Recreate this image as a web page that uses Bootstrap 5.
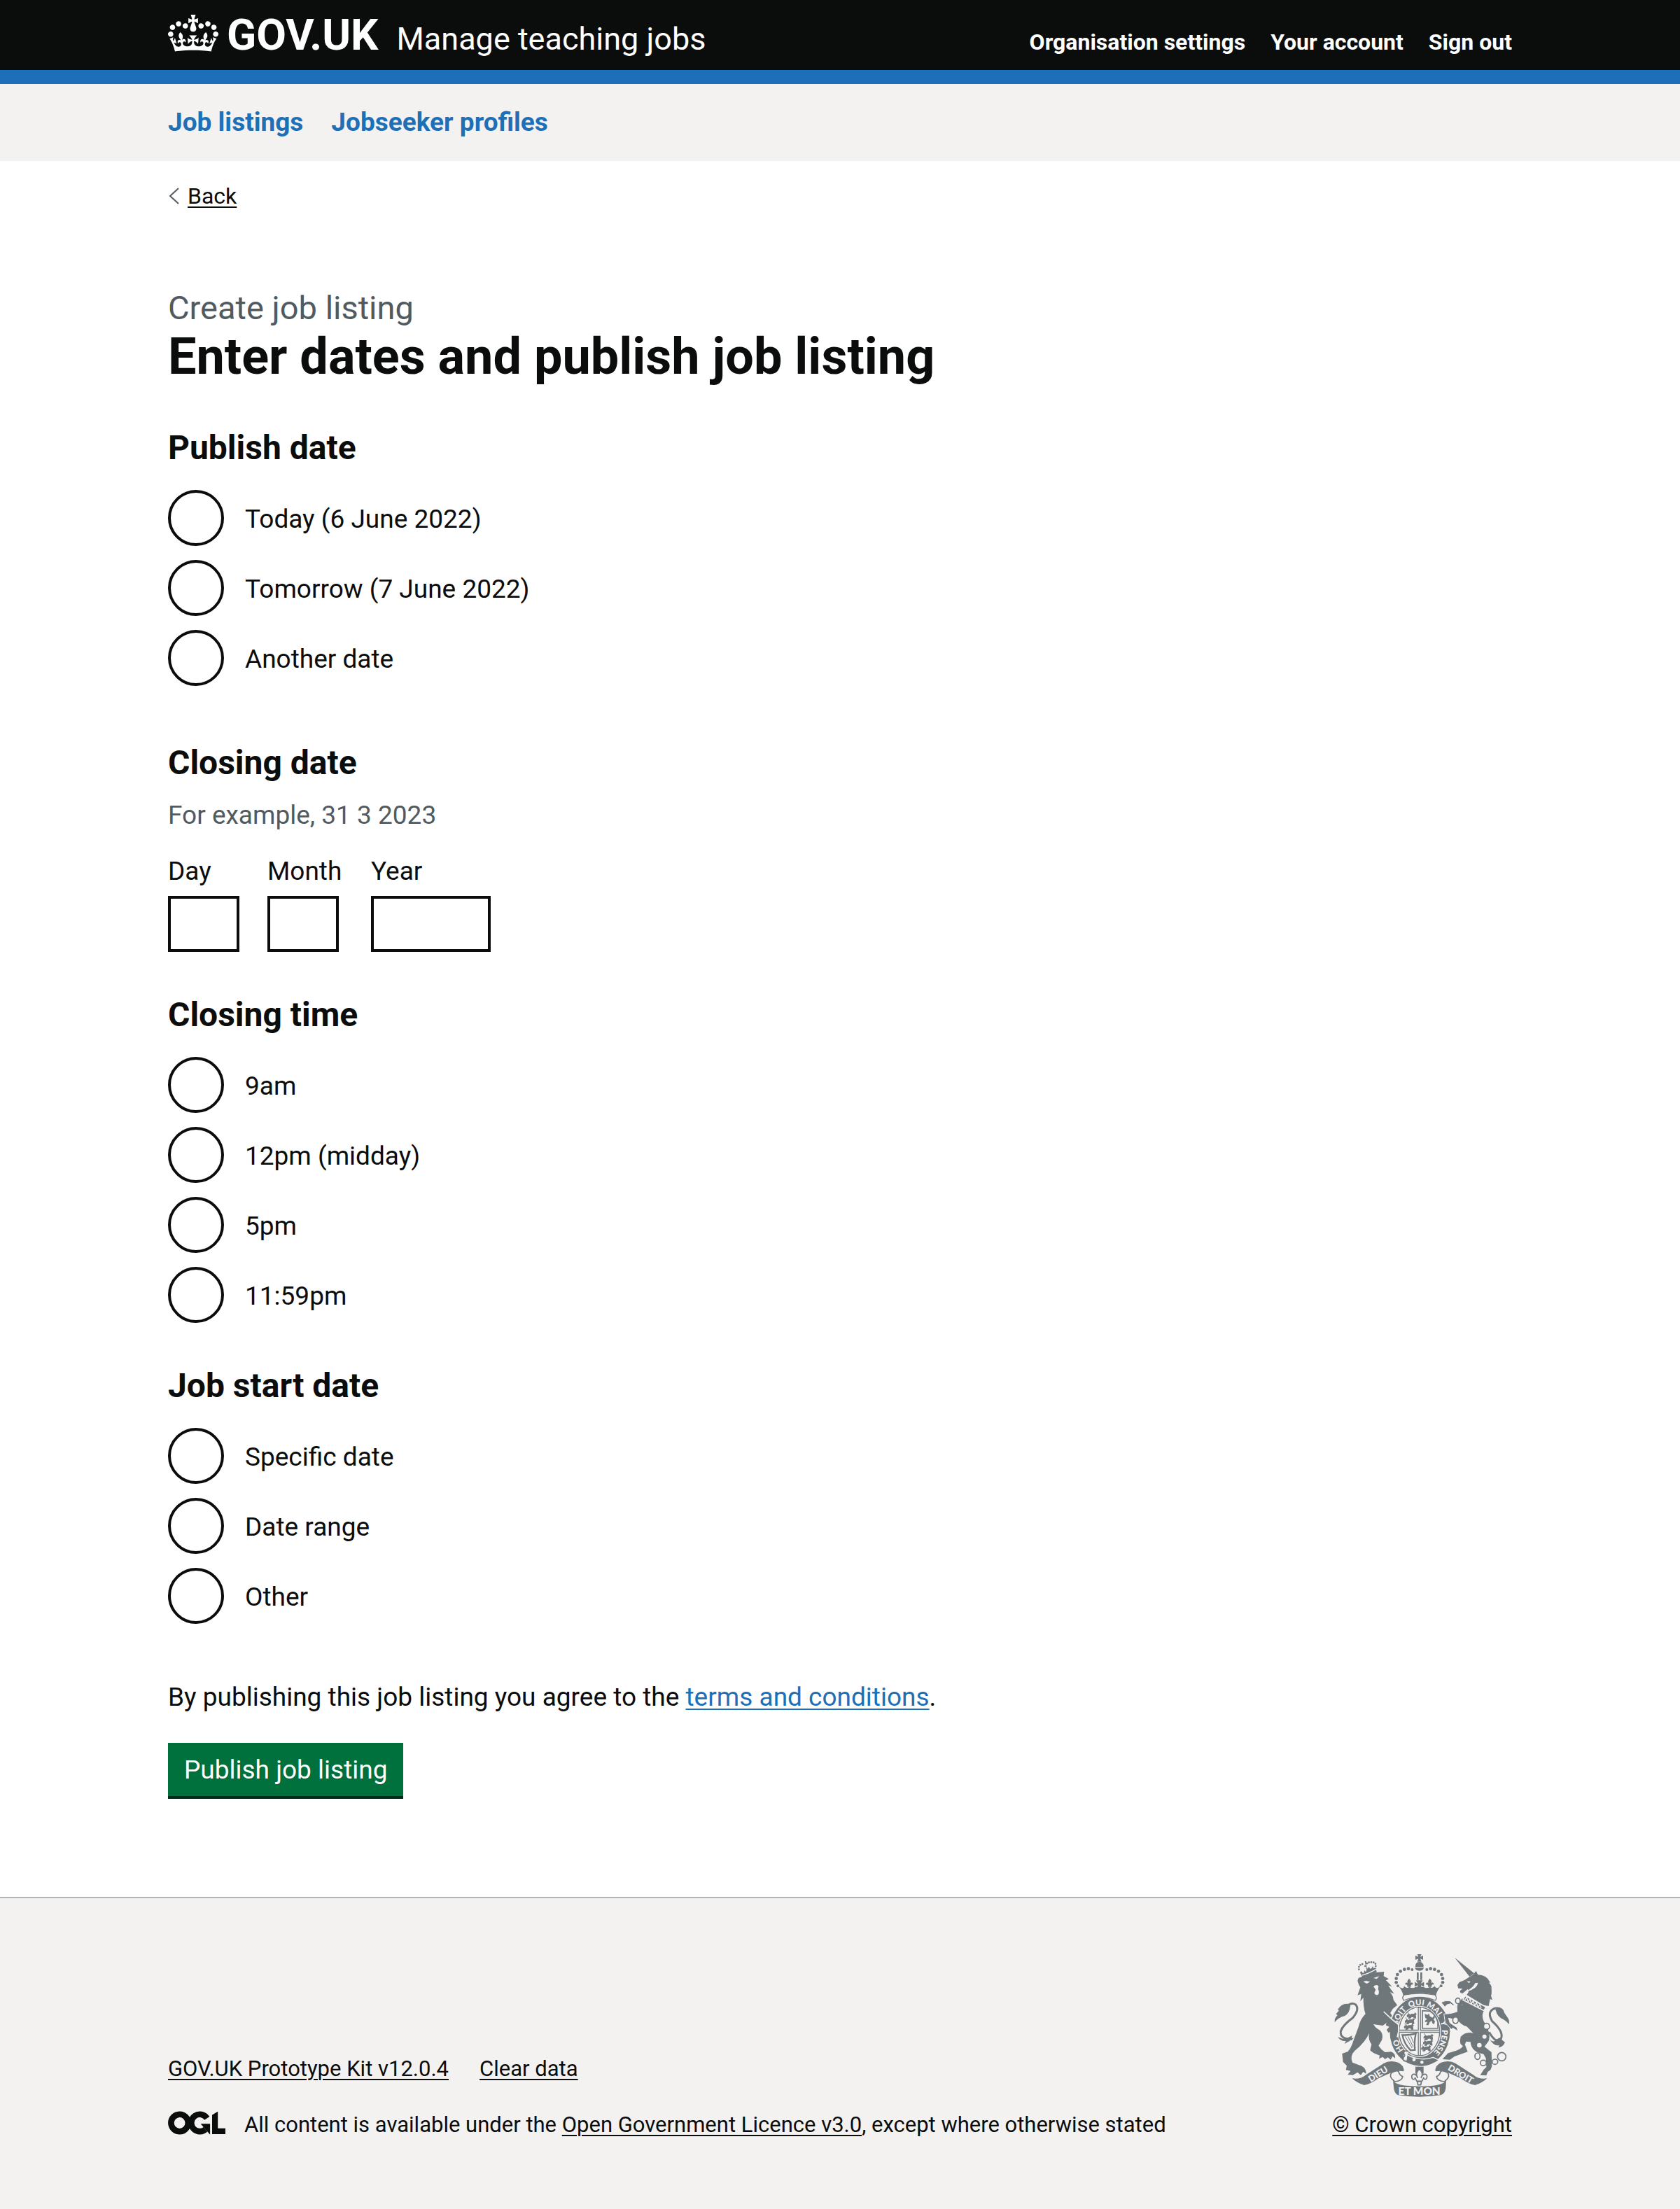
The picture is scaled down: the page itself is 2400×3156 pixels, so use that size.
<!DOCTYPE html>
<html lang="en">
<head>
<meta charset="utf-8">
<meta name="viewport" content="width=device-width, initial-scale=1">
<title>Enter dates and publish job listing - Manage teaching jobs - GOV.UK</title>
<link rel="stylesheet" href="https://cdn.jsdelivr.net/npm/bootstrap@5.3.0/dist/css/bootstrap.min.css">
<style>
:root{--ink:#0b0c0c;--link:#1d70b8;--muted-ink:#505a5f;--panel:#f3f2f1;--crest:#6f777b}
body{font-family:Roboto,"Liberation Sans",sans-serif;font-size:37px;line-height:50px;color:var(--ink);background:var(--panel)}
.page-width{max-width:1920px;padding:0;margin-left:auto;margin-right:auto;width:100%}
a{text-decoration-thickness:2px;text-underline-offset:4px;color:var(--link)}
.ink-link{color:var(--ink)}
.site-header{background:var(--ink);border-bottom:20px solid var(--link)}
.header-row{padding-top:20px;height:100px;line-height:60px}
.crown{width:72px;height:53px;margin-top:1px;margin-right:12px}
.wordmark{font-size:62px;margin-right:26px}
.service-name{font-size:45px}
.header-links{gap:36px;font-size:32px}
.service-nav{background:var(--panel)}
.service-nav ul{gap:40px;padding:30px 0}
.back-link{font-size:32px;line-height:40px;margin-top:30px;gap:12px}
.back-link svg{width:16px;height:24px}
.page-body{padding-top:110px;padding-bottom:140px}
.caption-l{font-size:47px;line-height:60px;color:var(--muted-ink)}
.title-l{font-size:72px;line-height:80px;margin-bottom:60px}
fieldset{margin-bottom:60px}
fieldset.roomy{margin-bottom:80px}
legend{float:none;font-size:48px;line-height:60px;font-weight:700;margin-bottom:30px}
legend.tight{margin-bottom:20px}
.radio-list{gap:20px}
.radio-row{gap:30px;margin:0;padding:0;min-height:80px}
.radio-row .form-check-input{float:none;flex:none;width:80px;height:80px;margin:0;border:4px solid var(--ink);background-color:#fff}
.radio-row .form-check-label{padding-top:3px}
.hint{color:var(--muted-ink);margin-bottom:30px}
.date-parts{gap:40px}
.date-part{min-width:102px}
.date-part label{display:block;margin-bottom:10px}
.date-part .form-control{width:102px;height:80px;border:4px solid var(--ink);border-radius:0;font-size:37px;padding:8px}
.date-part .form-control.wide{width:171px}
.month-part{min-width:108px}
.btn-publish{background:#00703c;color:#fff;border:0;border-bottom:4px solid #002d18;border-radius:0;font-size:37px;line-height:50px;padding:14px 23px 12px;margin-top:40px}
.btn-publish:hover{background:#005a30;color:#fff}
.site-footer{border-top:2px solid #b1b4b6;background:var(--panel);padding:80px 0 100px;font-size:31px;line-height:40px}
.footer-links{gap:44px;margin-bottom:40px}
.licence{gap:27px}
.ogl{width:82px;height:34px}
.royal-arms{width:250px;height:204px;margin-bottom:20px;margin-right:2px}
</style>
</head>
<body>
<header class="site-header text-white">
  <div class="page-width header-row d-flex align-items-baseline">
    <a href="#" class="d-flex align-items-baseline text-white text-decoration-none">
      <svg class="crown align-self-start" viewBox="0 0 132 97" aria-hidden="true"><path fill="currentColor" fill-rule="evenodd" d="M25 30.2c3.5 1.5 7.7-.2 9.1-3.7 1.5-3.6-.2-7.8-3.9-9.2-3.6-1.4-7.6.3-9.1 3.9-1.4 3.5.3 7.5 3.9 9zM9 39.5c3.6 1.5 7.8-.2 9.2-3.7 1.5-3.6-.2-7.8-3.9-9.1-3.6-1.5-7.6.2-9.1 3.8-1.4 3.5.3 7.5 3.8 9zM4.4 57.2c3.5 1.5 7.7-.2 9.1-3.8 1.5-3.6-.2-7.7-3.9-9.1-3.5-1.5-7.6.3-9.1 3.8-1.4 3.5.3 7.6 3.9 9.1zm38.3-21.4c3.5 1.5 7.7-.2 9.1-3.8 1.5-3.6-.2-7.7-3.9-9.1-3.6-1.5-7.6.3-9.1 3.8-1.3 3.6.4 7.7 3.9 9.1zm64.4-5.6c-3.6 1.5-7.8-.2-9.1-3.7-1.5-3.6.2-7.8 3.8-9.2 3.6-1.4 7.7.3 9.2 3.9 1.3 3.5-.4 7.5-3.9 9zm15.9 9.3c-3.6 1.5-7.7-.2-9.1-3.7-1.5-3.6.2-7.8 3.7-9.1 3.6-1.5 7.7.2 9.2 3.8 1.5 3.5-.3 7.5-3.8 9zm4.7 17.7c-3.6 1.5-7.8-.2-9.2-3.8-1.5-3.6.2-7.7 3.9-9.1 3.6-1.5 7.7.3 9.2 3.8 1.3 3.5-.4 7.6-3.9 9.1zM89.3 35.8c-3.6 1.5-7.8-.2-9.2-3.8-1.4-3.6.2-7.7 3.9-9.1 3.6-1.5 7.7.3 9.2 3.8 1.4 3.6-.3 7.7-3.9 9.1zM69.7 17.7l8.9 4.7V9.3l-8.9 2.8c-.2-.3-.5-.6-.9-.9L72.4 0H59.6l3.5 11.2c-.3.3-.6.5-.9.9l-8.8-2.8v13.1l8.8-4.7c.3.3.6.7.9.9l-5 15.4v.1c-.2.8-.4 1.6-.4 2.4 0 4.1 3.1 7.5 7 8.1h.2c.3 0 .7.1 1 .1.4 0 .7 0 1-.1h.2c4-.6 7.1-4.1 7.1-8.1 0-.8-.1-1.7-.4-2.4V34l-5.1-15.4c.4-.2.7-.6 1-.9zM66 92.8c16.9 0 32.8 1.1 47.1 3.2 4-16.9 8.9-26.7 14-33.5l-9.6-3.4c1 4.9 1.1 7.2 0 10.2-1.5-1.4-3-4.3-4.2-8.7L108.6 76c2.8-2 5-3.2 7.5-3.3-4.4 9.4-10 11.9-13.6 11.2-4.3-.8-6.3-4.6-5.6-7.9 1-4.7 5.7-5.9 8-.5 4.3-8.7-3-11.4-7.6-8.8 7.1-7.2 7.9-13.5 2.1-21.1-8 6.1-8.1 12.3-4.5 20.8-4.7-5.4-12.1-2.5-9.5 6.2 3.4-5.2 7.9-2 7.2 3.1-.6 4.3-6.4 7.8-13.5 7.2-10.3-.9-10.9-8-11.2-13.8 2.5-.5 7.1 1.8 11 7.3L80.2 60c-4.1 4.4-8 5.3-12.3 5.4 1.4-4.4 8-11.6 8-11.6H55.5s6.4 7.2 7.9 11.6c-4.2-.1-8-1-12.3-5.4l1.4 16.4c3.9-5.5 8.5-7.7 10.9-7.3-.3 5.8-.9 12.8-11.1 13.8-7.2.6-12.9-2.9-13.5-7.2-.7-5 3.8-8.3 7.1-3.1 2.7-8.7-4.6-11.6-9.4-6.2 3.7-8.5 3.6-14.7-4.6-20.8-5.8 7.6-5 13.9 2.2 21.1-4.7-2.6-11.9.1-7.7 8.8 2.3-5.5 7.1-4.2 8.1.5.7 3.3-1.3 7.1-5.7 7.9-3.5.7-9-1.8-13.5-11.2 2.5.1 4.7 1.3 7.5 3.3l-4.7-15.4c-1.2 4.4-2.7 7.2-4.3 8.7-1.1-3-.9-5.3 0-10.2l-9.5 3.4c5 6.9 9.9 16.7 14 33.5 14.8-2.1 30.8-3.2 47.7-3.2z"/></svg>
      <span class="wordmark fw-bold">GOV.UK</span>
    </a>
    <a href="#" class="service-name text-white text-decoration-none">Manage teaching jobs</a>
    <nav class="header-links d-flex ms-auto fw-bold" aria-label="Account">
      <a href="#" class="text-white text-decoration-none">Organisation settings</a>
      <a href="#" class="text-white text-decoration-none">Your account</a>
      <a href="#" class="text-white text-decoration-none">Sign out</a>
    </nav>
  </div>
</header>
<nav class="service-nav" aria-label="Service">
  <ul class="page-width list-unstyled d-flex mb-0 fw-bold">
    <li><a href="#" class="text-decoration-none">Job listings</a></li>
    <li><a href="#" class="text-decoration-none">Jobseeker profiles</a></li>
  </ul>
</nav>
<div class="bg-white overflow-hidden">
  <div class="page-width">
    <div class="back-link d-flex align-items-center">
      <svg viewBox="0 0 16 24" fill="none" stroke="#505a5f" stroke-width="2" aria-hidden="true"><path d="M15 1 3 12l12 11"/></svg>
      <a href="#" class="ink-link">Back</a>
    </div>
    <main class="page-body">
      <div class="caption-l">Create job listing</div>
      <h1 class="title-l fw-bold">Enter dates and publish job listing</h1>
      <form>
        <fieldset class="roomy">
          <legend>Publish date</legend>
          <div class="radio-list d-flex flex-column">
            <div class="radio-row form-check d-flex align-items-center"><input class="form-check-input" type="radio" name="publish" id="p1"><label class="form-check-label" for="p1">Today (6 June 2022)</label></div>
            <div class="radio-row form-check d-flex align-items-center"><input class="form-check-input" type="radio" name="publish" id="p2"><label class="form-check-label" for="p2">Tomorrow (7 June 2022)</label></div>
            <div class="radio-row form-check d-flex align-items-center"><input class="form-check-input" type="radio" name="publish" id="p3"><label class="form-check-label" for="p3">Another date</label></div>
          </div>
        </fieldset>
        <fieldset>
          <legend class="tight">Closing date</legend>
          <div class="hint">For example, 31 3 2023</div>
          <div class="date-parts d-flex">
            <div class="date-part"><label for="day">Day</label><input class="form-control" id="day" type="text" inputmode="numeric"></div>
            <div class="date-part month-part"><label for="month">Month</label><input class="form-control" id="month" type="text" inputmode="numeric"></div>
            <div class="date-part"><label for="year">Year</label><input class="form-control wide" id="year" type="text" inputmode="numeric"></div>
          </div>
        </fieldset>
        <fieldset>
          <legend>Closing time</legend>
          <div class="radio-list d-flex flex-column">
            <div class="radio-row form-check d-flex align-items-center"><input class="form-check-input" type="radio" name="time" id="t1"><label class="form-check-label" for="t1">9am</label></div>
            <div class="radio-row form-check d-flex align-items-center"><input class="form-check-input" type="radio" name="time" id="t2"><label class="form-check-label" for="t2">12pm (midday)</label></div>
            <div class="radio-row form-check d-flex align-items-center"><input class="form-check-input" type="radio" name="time" id="t3"><label class="form-check-label" for="t3">5pm</label></div>
            <div class="radio-row form-check d-flex align-items-center"><input class="form-check-input" type="radio" name="time" id="t4"><label class="form-check-label" for="t4">11:59pm</label></div>
          </div>
        </fieldset>
        <fieldset class="roomy">
          <legend>Job start date</legend>
          <div class="radio-list d-flex flex-column">
            <div class="radio-row form-check d-flex align-items-center"><input class="form-check-input" type="radio" name="start" id="s1"><label class="form-check-label" for="s1">Specific date</label></div>
            <div class="radio-row form-check d-flex align-items-center"><input class="form-check-input" type="radio" name="start" id="s2"><label class="form-check-label" for="s2">Date range</label></div>
            <div class="radio-row form-check d-flex align-items-center"><input class="form-check-input" type="radio" name="start" id="s3"><label class="form-check-label" for="s3">Other</label></div>
          </div>
        </fieldset>
        <p class="mb-0">By publishing this job listing you agree to the <a href="#">terms and conditions</a>.</p>
        <button type="submit" class="btn btn-publish d-block">Publish job listing</button>
      </form>
    </main>
  </div>
</div>
<footer class="site-footer">
  <div class="page-width d-flex justify-content-between align-items-end">
    <div>
      <div class="footer-links d-flex">
        <a href="#" class="ink-link">GOV.UK Prototype Kit v12.0.4</a>
        <a href="#" class="ink-link">Clear data</a>
      </div>
      <div class="licence d-flex align-items-start">
        <svg class="ogl" viewBox="0 0 484 196" role="img" aria-label="Open Government Licence">
          <clipPath id="slant"><path d="M371 32 422 0V143h62v51H371z"/></clipPath>
          <g fill="none" stroke="#0b0c0c" stroke-width="51">
            <circle cx="98" cy="98" r="72"/>
            <path d="M329 59A72 72 0 1 0 316 152"/>
            <path d="M396 0V168H484" clip-path="url(#slant)"/>
          </g>
          <path d="M275 106h80v88h-3z" fill="#0b0c0c"/>
        </svg>
        <span>All content is available under the <a href="#" class="ink-link">Open Government Licence v3.0</a>, except where otherwise stated</span>
      </div>
    </div>
    <div class="d-flex flex-column align-items-center">
      <svg class="royal-arms" viewBox="72 66 750 612" role="img" aria-label="Royal coat of arms" font-family="Lato,sans-serif" font-weight="900">
        <defs>
          <path id="garter" d="M438 510A96 113 0 0 1 438 284A96 113 0 0 1 438 510"/>
          <path id="fleur" d="M0-18C9-8 9-2 4 4 10-4 19 0 16 9 13 6 9 8 8 12L7 18H-7L-8 12C-9 8-13 6-16 9-19 0-10-4-4 4-9-2-9-8 0-18z"/>
          <g id="beast"><path d="M-22-4-14-10-8-6-3-9H9l4-6 5 6-4 3 2 14H9l-3-6-10 1-4 6h-8l3-9-8 3z"/><path d="M-14-10q-8-6-4-9" fill="none" stroke="#6f777b" stroke-width="3"/></g>
          <g id="pearls" fill="#6f777b"><circle cx="345" cy="202" r="6"/><circle cx="338" cy="187" r="7"/><circle cx="338" cy="170" r="7"/><circle cx="343" cy="153" r="7"/><circle cx="356" cy="139" r="7"/><circle cx="373" cy="131" r="7"/><circle cx="390" cy="128" r="7"/><circle cx="406" cy="132" r="6"/></g>
        </defs>
        <g fill="#6f777b">
          <!-- lion -->
          <circle cx="178" cy="131" r="4"/><circle cx="178" cy="120" r="4"/><circle cx="184" cy="112" r="4"/><circle cx="193" cy="108" r="4"/><circle cx="221" cy="101" r="4"/><circle cx="231" cy="100" r="4"/><circle cx="241" cy="101" r="4"/><circle cx="249" cy="107" r="4"/><circle cx="250" cy="117" r="4"/>
          <path d="M203 96h7l-1 6 8-1v8l-7-1 1 12 4 8 6-9 5 10 7-4 4-8 4 9 10-2 3 20-60 20-12-20 8-5 5 9 5-4 1-9 7 7 3-9-2-14-7 2-1-7 6 0z"/>
          <path d="M192 156Q222 148 256 128" stroke="#f3f2f1" stroke-width="4" fill="none"/>
          <path d="M176 168Q232 142 286 141L284 160 306 172 294 178Q306 190 320 205L304 200Q314 216 329 235L311 229Q325 244 326 262L342 284 323 300 312 318 346 362V392L342 418 333 422 324 417 317 402 320 392 304 400 299 390 310 377 294 370 300 358 280 372 240 366Q250 384 268 392 285 410 276 434L262 458Q272 474 290 486L316 484Q336 492 333 512L322 503 314 518 302 508 290 516 280 506 264 514 267 500Q240 492 226 478L232 452Q216 432 222 404 206 442 160 480 138 502 150 530L190 545Q210 556 209 578L196 570 186 584 172 572 152 584 130 582 142 566 122 562 126 544 110 528 106 492 130 484Q144 470 156 432L176 378Q184 344 206 322 196 292 197 252L184 268 188 236 172 242 184 208 178 198 172 180z"/>
          <path d="M150 430Q96 432 100 396 108 370 152 338 182 302 164 282 150 272 132 284" fill="none" stroke="#6f777b" stroke-width="9"/>
          <path d="M140 280Q106 272 88 302L92 308 80 322 86 328Q72 340 74 358 88 338 118 330 138 318 141 288z"/>
          <path d="M88 420Q114 434 126 426L150 414Q140 430 158 424 136 442 116 450L122 438Q98 440 88 420z"/>
          <!-- unicorn -->
          <path d="M588 80 672 148 652 162z"/>
          <path d="M650 164Q668 154 670 150L680 138 688 154Q724 154 740 186L736 190Q748 200 746 212 748 236 744 244L750 262 740 258 734 288 712 284 640 240Q654 222 644 216L622 234Q608 232 612 222L622 214 604 212 600 198 608 186Q632 178 650 164z"/>
          <path d="M620 256 714 308Q702 324 712 352 746 404 734 438L716 462 746 486 748 546 742 562 730 570 724 586 698 584 712 562 724 550 722 512 712 494Q660 486 656 442L638 440 632 452 644 484 588 504 568 518 536 516 560 490Q616 476 624 460 606 452 614 420 634 396 668 404L640 376Q610 366 600 344L600 316 600 284z"/>
          <path d="M736 400Q764 450 786 430 802 400 748 352 724 308 764 297" fill="none" stroke="#6f777b" stroke-width="9"/>
          <path d="M762 293Q796 290 802 318 812 334 816 338 824 350 821 366 808 350 786 340 764 322 762 293z"/>
          <path d="M738 430Q752 446 762 436L780 424Q794 436 804 444 794 466 776 466L780 456Q756 462 738 430z"/>
        </g>
        <path d="M196 184 208 180 226 184 212 192zM240 168 266 160 254 172zM240 204q16-12 22 0l-2 12q8 14 0 24-12 4-16-8l6-14z" fill="#f3f2f1"/>
        <path d="M640 182l16 0-6 8zM688 188Q684 216 636 226 670 208 676 190z" fill="#f3f2f1"/>
        <path d="M632 244 722 292 714 308 624 262z" fill="#6f777b" stroke="#f3f2f1" stroke-width="5"/>
        <path d="M632 262l8-12 6 20 8-12 6 20 8-12 6 20 8-12 6 20 8-12 6 16" fill="none" stroke="#f3f2f1" stroke-width="4"/>
        <!-- garter and shield -->
        <ellipse cx="439" cy="397" rx="134" ry="154" fill="#f3f2f1"/>
        <ellipse cx="439" cy="397" rx="129" ry="148" fill="#6f777b"/>
        <ellipse cx="437" cy="397" rx="93" ry="110" fill="#f3f2f1"/>
        <ellipse cx="437" cy="397" rx="87" ry="104" fill="none" stroke="#6f777b" stroke-width="4"/>
        <path d="M437 292V500M350 396H525" stroke="#6f777b" stroke-width="13"/>
        <path d="M437 296V498M352 396H523" stroke="#f3f2f1" stroke-width="5"/>
        <g fill="#6f777b" stroke="#6f777b" stroke-width="3"><use href="#beast" x="406" y="332"/><use href="#beast" x="398" y="356"/><use href="#beast" x="394" y="380"/><use href="#beast" x="478" y="424"/><use href="#beast" x="476" y="448"/><use href="#beast" x="468" y="472"/></g>
        <path d="M450 308V384H516V356Q508 326 482 310z" fill="none" stroke="#6f777b" stroke-width="5"/>
        <path d="M460 322l12 4 6-6 4 12 12 6 4-8 6 6-6 10 6 8-4 12-6-2-4-12-8 4-6 14h-10l6-16-8 4-4-6 10-8-8-6z" fill="#6f777b"/>
        <path d="M364 412Q390 414 422 406 414 440 418 476L400 478Q372 452 364 412z" fill="none" stroke="#6f777b" stroke-width="7"/>
        <path d="M376 418l30 50M388 418l22 44M400 416l12 30" stroke="#6f777b" stroke-width="3"/>
        <g font-size="34" fill="#f3f2f1" text-anchor="middle">
          <text><textPath href="#garter" startOffset="16%">HO</textPath></text>
          <text><textPath href="#garter" startOffset="35%">SOIT</textPath></text>
          <text><textPath href="#garter" startOffset="48%">QUI</textPath></text>
          <text><textPath href="#garter" startOffset="60%">MAL</textPath></text>
          <text><textPath href="#garter" startOffset="70%">Y</textPath></text>
          <text><textPath href="#garter" startOffset="82%">PENSE</textPath></text>
        </g>
        <path d="M372 486Q392 508 437 514 470 518 496 508L522 520Q480 550 437 547 396 544 368 522z" fill="#6f777b" stroke="#f3f2f1" stroke-width="4"/>
        <g fill="#f3f2f1"><circle cx="414" cy="518" r="7"/><circle cx="448" cy="529" r="7"/></g>
        <path d="M388 482q-20-6-18 10 8 8-2 16-4 18 14 16" fill="#f3f2f1" stroke="#6f777b" stroke-width="6"/>
        <!-- forelegs over the garter -->
        <path d="M276 322 284 314 318 346 346 370V396L342 420 333 426 324 419 317 404 320 394 304 402 297 390 308 377 293 370 298 356 280 370 250 364z" fill="#6f777b"/>
        <path d="M284 312 318 344 348 368V396L342 422" fill="none" stroke="#f3f2f1" stroke-width="5"/>
        <g fill="#6f777b">
          <path d="M622 284 590 296 572 278 556 282 546 292 530 272Q550 262 568 266L596 290 604 310z" stroke="#f3f2f1" stroke-width="3"/>
          <path d="M612 306Q580 322 542 322L548 360 574 388 580 382 602 396 598 380 568 360 562 340 606 350z" stroke="#f3f2f1" stroke-width="3"/>
          <path d="M600 284h34v70h-34z"/>
        </g>
        <!-- chain -->
        <g fill="#f3f2f1"><circle cx="585" cy="292" r="9"/><circle cx="716" cy="419" r="9"/><circle cx="694" cy="456" r="10"/></g>
        <g fill="#f3f2f1" stroke="#6f777b" stroke-width="5"><ellipse cx="602" cy="266" rx="10" ry="12"/><ellipse cx="592" cy="349" rx="12" ry="14"/><circle cx="725" cy="375" r="13"/><ellipse cx="686" cy="503" rx="11" ry="14"/><ellipse cx="711" cy="532" rx="13" ry="12"/><ellipse cx="761" cy="527" rx="12" ry="11"/><circle cx="790" cy="505" r="18"/></g>
        <!-- crown -->
        <use href="#pearls"/><use href="#pearls" transform="matrix(-1 0 0 1 875 0)"/>
        <g fill="#6f777b">
          <path d="M428 66h18l-5 11 12-5v18l-12-5 5 13h-18l5-13-13 5V72l13 5z"/>
          <path d="M420 120Q418 100 437 98 456 100 455 120zM418 123h38q-2 14-19 14t-19-14z"/>
          <path d="M426 144h8v32h-8zM441 144h8v32h-8z"/>
          <path d="M422 178h30l-9 14 14-7v20l-14-6 4 10h-20l4-10-14 6v-20l14 7z"/>
          <use href="#fleur" x="393" y="188"/><use href="#fleur" x="482" y="188"/>
          <path d="M346 200Q368 222 372 202 380 216 394 206 410 216 420 206H456Q466 216 482 206 494 216 502 202 508 220 530 200 512 222 508 242 438 222 368 242 364 222 346 200z"/>
        </g>
        <path d="M372 240Q437 228 504 240 514 252 506 264 437 236 370 264 360 252 372 240z" fill="#f3f2f1" stroke="#6f777b" stroke-width="4"/>
        <!-- motto ribbon -->
        <path d="M148 598Q184 604 206 584L284 534Q310 518 346 530 374 544 370 568 340 562 316 574L262 598Q226 624 200 627 170 618 148 598z" fill="#6f777b"/>
        <path d="M728 598Q692 604 670 584L592 534Q566 518 530 530 502 544 506 568 536 562 560 574L614 598Q650 624 676 627 706 618 728 598z" fill="#6f777b"/>
        <path d="M324 606Q332 632 437 632 542 632 552 606L550 640Q548 664 528 670 437 684 346 670 332 664 328 644z" fill="#6f777b"/>
        <path d="M318 574Q304 592 332 612 362 610 366 590 350 584 348 568 336 562 318 574zM558 574Q572 592 544 612 514 610 510 590 526 584 528 568 540 562 558 574z" fill="#f3f2f1" stroke="#6f777b" stroke-width="5"/>
        <path d="M420 548H455V578H420z" fill="#6f777b"/>
        <path d="M437 558C452 572 452 584 444 596 452 574 474 576 469 596 464 608 454 600 456 594L448 610H426L418 594C420 600 410 608 405 596 400 576 422 574 430 596 422 584 422 572 437 558zM428 612H446L443 626H431z" fill="#f3f2f1" stroke="#6f777b" stroke-width="5"/>
        <g fill="#f3f2f1" text-anchor="middle">
          <text font-size="38" transform="translate(267 591) rotate(-32)">DIEU</text>
          <text font-size="38" transform="translate(607 591) rotate(31)">DROIT</text>
          <text font-size="46" x="437" y="670">ET MON</text>
        </g>
      </svg>
      <a href="#" class="ink-link">© Crown copyright</a>
    </div>
  </div>
</footer>
<script src="https://cdn.jsdelivr.net/npm/bootstrap@5.3.0/dist/js/bootstrap.bundle.min.js"></script>
</body>
</html>
